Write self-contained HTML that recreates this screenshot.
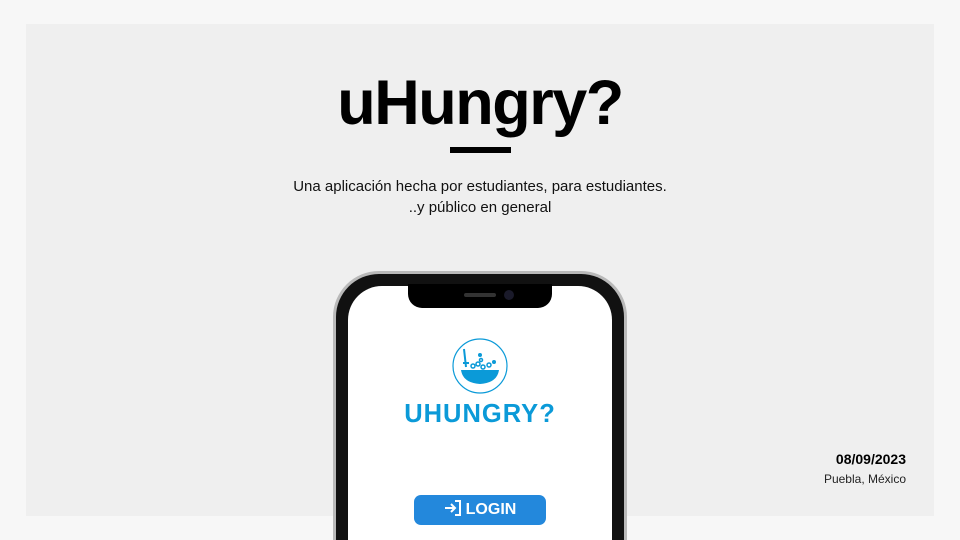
<!DOCTYPE html>
<html><head><meta charset="utf-8"><style>
*{margin:0;padding:0;box-sizing:border-box}
html,body{width:960px;height:540px;overflow:hidden}
body{background:#f7f7f7;position:relative;font-family:"Liberation Sans",sans-serif}
.slide{position:absolute;left:26px;top:24px;width:908px;height:492px;background:#efefef}
.title{position:absolute;left:0;width:960px;top:67px;text-align:center;font-size:63px;font-weight:bold;letter-spacing:-1.5px;color:#000}
.bar{position:absolute;left:450px;top:147px;width:61px;height:6px;background:#000}
.sub{position:absolute;left:0;width:960px;top:176px;text-align:center;font-size:15px;line-height:21px;color:#111}
.phone{position:absolute;left:333px;top:271px;width:294px;height:269px;border-radius:46px 46px 0 0;background:#111;border:3px solid #b9b9b9;border-bottom:0}
.screen{position:absolute;left:348px;top:286px;width:264px;height:254px;border-radius:34px 34px 0 0;background:#fff}
.notch{position:absolute;left:408px;top:284px;width:144px;height:24px;background:#000;border-radius:0 0 14px 14px}
.spk{position:absolute;left:464px;top:293px;width:32px;height:4px;border-radius:2px;background:#333}
.cam{position:absolute;left:504px;top:290px;width:10px;height:10px;border-radius:50%;background:#1a1a2a}
.logo{position:absolute;left:0;width:960px;top:400px;text-align:center;font-size:25.5px;font-weight:bold;color:#0b9ad8;letter-spacing:1px}
.btn{position:absolute;left:414px;top:495px;width:132px;height:30px;border-radius:7px;background:#2388dc;color:#fff;font-weight:bold;font-size:16px;text-align:center;line-height:30px}
.date{position:absolute;right:54px;top:451px;font-size:14px;font-weight:bold;color:#000}
.loc{position:absolute;right:54px;top:472px;font-size:12px;color:#222}
</style></head><body>
<div class="slide"></div>
<div class="title">uHungry?</div>
<div class="bar"></div>
<div class="sub">Una aplicación hecha por estudiantes, para estudiantes.<br>..y público en general</div>
<div class="phone"></div>
<div class="screen"></div>
<div class="notch"></div>
<div class="spk"></div>
<div class="cam"></div>
<svg style="position:absolute;left:451px;top:337px" width="58" height="58" viewBox="0 0 58 58">
<circle cx="29" cy="29" r="27" fill="none" stroke="#0b9ad8" stroke-width="1.2"/>
<path d="M10 33 H48 Q46 46 29 47 Q12 46 10 33Z" fill="#0b9ad8"/>
<path d="M13 12 L15 30 M12 26 h6" stroke="#0b9ad8" stroke-width="2" fill="none"/>
<g fill="none" stroke="#0b9ad8" stroke-width="1.5"><circle cx="22" cy="29" r="2"/><circle cx="27" cy="27" r="2"/><circle cx="32" cy="30" r="2"/><circle cx="38" cy="28" r="2"/><circle cx="30" cy="23" r="1.5"/></g>
<circle cx="43" cy="25" r="2" fill="#0b9ad8"/><circle cx="29" cy="18" r="2" fill="#0b9ad8"/>
</svg>
<div class="logo">UHUNGRY?</div>
<div class="btn"><svg width="18" height="16" viewBox="0 0 18 16" style="vertical-align:-2px;margin-right:4px"><path d="M1 8 H11 M7 4 L11 8 L7 12 M11 1 H16 V15 H11" fill="none" stroke="#fff" stroke-width="2"/></svg>LOGIN</div>
<div class="date">08/09/2023</div>
<div class="loc">Puebla, México</div>
</body></html>
